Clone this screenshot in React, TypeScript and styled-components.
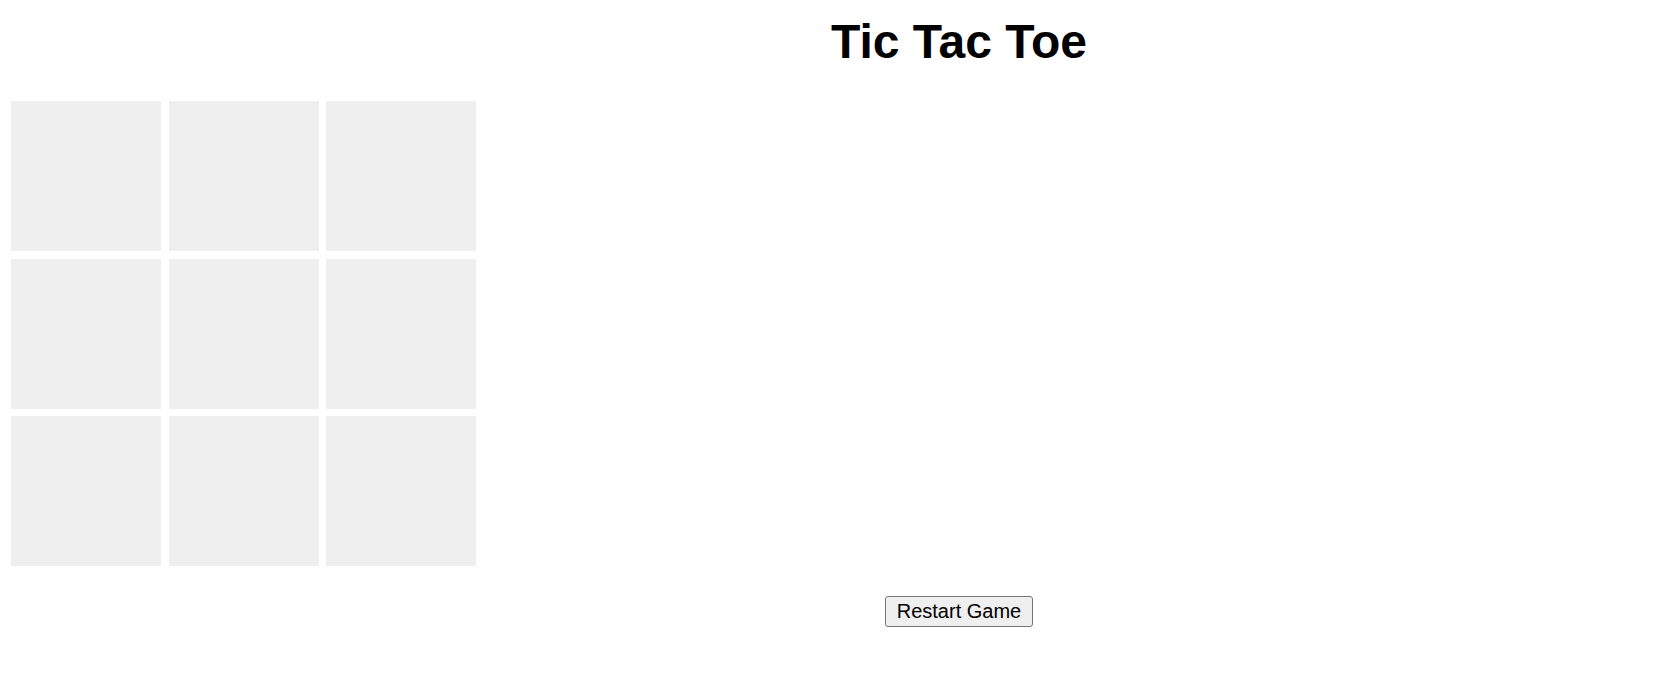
import React, { useState } from "react";
import styled, { createGlobalStyle } from "styled-components";

const GlobalStyle = createGlobalStyle`
  html, body {
    margin: 0;
    padding: 0;
    background: #ffffff;
    font-family: "Liberation Sans", Arial, sans-serif;
  }
`;

const Page = styled.div`
  display: flex;
  flex-direction: column;
  padding: 14px 8px 0 11px;
`;

const Title = styled.h1`
  margin: 0 0 32px 0;
  padding-left: 250px;
  font-size: 48px;
  line-height: 55px;
  font-weight: bold;
  text-align: center;
  color: #000;
`;

const Board = styled.div`
  display: grid;
  grid-template-columns: repeat(3, 150px);
  grid-auto-rows: 150px;
  gap: 7.5px;
  align-self: flex-start;
`;

const Cell = styled.div`
  background: #efefef;
  display: flex;
  align-items: center;
  justify-content: center;
  font-size: 64px;
  font-weight: bold;
  cursor: pointer;
`;

const Controls = styled.div`
  display: flex;
  justify-content: center;
  padding-left: 250px;
  margin-top: 30px;
`;

const RestartButton = styled.button`
  font-family: "Liberation Sans", Arial, sans-serif;
  font-size: 20px;
  line-height: 23px;
  padding: 3px 11px;
  background: #efefef;
  color: #000;
  border: 1px solid #767676;
  border-radius: 3px;
  cursor: pointer;
`;

export default function App() {
  const [cells, setCells] = useState<(string | null)[]>(Array(9).fill(null));
  const [xNext, setXNext] = useState(true);

  const play = (i: number) => {
    if (cells[i]) return;
    const next = cells.slice();
    next[i] = xNext ? "X" : "O";
    setCells(next);
    setXNext(!xNext);
  };

  return (
    <>
      <GlobalStyle />
      <Page>
        <Title>Tic Tac Toe</Title>
        <Board>
          {cells.map((c, i) => (
            <Cell key={i} onClick={() => play(i)}>
              {c}
            </Cell>
          ))}
        </Board>
        <Controls>
          <RestartButton
            onClick={() => {
              setCells(Array(9).fill(null));
              setXNext(true);
            }}
          >
            Restart Game
          </RestartButton>
        </Controls>
      </Page>
    </>
  );
}
